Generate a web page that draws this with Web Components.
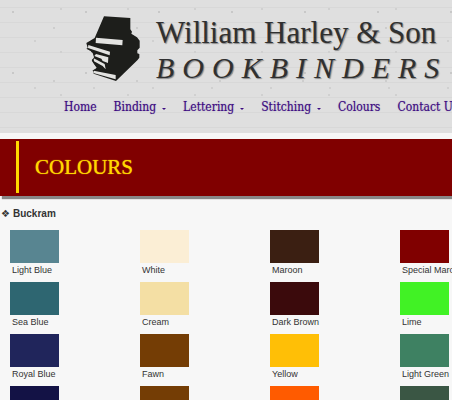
<!DOCTYPE html>
<html lang="en"><head><meta charset="utf-8"><title>William Harley &amp; Son Bookbinders – Colours</title>
<style>
body{margin:0;background:#f7f7f7;color:#333;font-family:"Liberation Sans",Arial,sans-serif;overflow:hidden}
</style></head><body>
<site-header>
<brand-logo slot="brand"></brand-logo>
<nav-item>Home</nav-item><nav-item menu>Binding</nav-item><nav-item menu>Lettering</nav-item><nav-item menu>Stitching</nav-item><nav-item>Colours</nav-item><nav-item>Contact Us</nav-item>
</site-header>
<main>
<page-banner>COLOURS</page-banner>
<colour-range><span slot="title">Buckram</span>
<colour-swatch colour="#588591">Light Blue</colour-swatch><colour-swatch colour="#fbeed5">White</colour-swatch><colour-swatch colour="#3b1f12">Maroon</colour-swatch><colour-swatch colour="#800000">Special Maroon</colour-swatch>
<colour-swatch colour="#2e6671">Sea Blue</colour-swatch><colour-swatch colour="#f4dfa4">Cream</colour-swatch><colour-swatch colour="#3b0a0c">Dark Brown</colour-swatch><colour-swatch colour="#41f225">Lime</colour-swatch>
<colour-swatch colour="#20255b">Royal Blue</colour-swatch><colour-swatch colour="#743d05">Fawn</colour-swatch><colour-swatch colour="#ffbf06">Yellow</colour-swatch><colour-swatch colour="#3e8162">Light Green</colour-swatch>
<colour-swatch colour="#131245"></colour-swatch><colour-swatch colour="#743d05"></colour-swatch><colour-swatch colour="#ff5b00"></colour-swatch><colour-swatch colour="#3a5644"></colour-swatch>
</colour-range>
</main>
<script>
const define = (name, html, setup) => customElements.define(name, class extends HTMLElement {
  constructor(){ super(); this.attachShadow({mode:'open'}).innerHTML = html; }
  connectedCallback(){ if (setup) setup(this, this.shadowRoot); }
});
define('site-header', `<style>
:host{display:block;overflow:hidden;padding:14px 0 16px;background-color:#dfdfdf;
background-image:radial-gradient(circle at 13px 12px,#c8c8c8 0 1px,transparent 1px),radial-gradient(circle at 61px 9px,#d0d0d0 0 1px,transparent 1px),radial-gradient(circle at 35px 41px,#d0d0d0 0 1px,transparent 1px),radial-gradient(circle at 54px 28px,#cdcdcd 0 1px,transparent 1px),radial-gradient(circle at 7px 38px,#d0d0d0 0 1px,transparent 1px),repeating-linear-gradient(transparent 0 7px,#d8d8d8 7px 8px,transparent 8px 15px);
background-size:73px 61px,67px 43px,59px 47px,83px 53px,71px 37px,auto}
.brand{padding-left:86px}
nav{display:flex;gap:17px;padding:13px 0 0 64px}
</style><div class="brand"><slot name="brand"></slot></div><nav aria-label="Main"><slot></slot></nav>`);
define('brand-logo', `<style>
:host{display:flex;gap:15px;color:#303030;white-space:nowrap;font-family:"Liberation Serif","Times New Roman",serif;text-shadow:1px 1px 1px #888}
svg{flex:none;width:55px;height:66px;margin-top:2px}
h1,p{margin:0;font-weight:400}
h1{font-size:31px;line-height:37px}
p{font-size:30px;line-height:33px;font-style:italic;letter-spacing:8px}
</style><svg viewBox="30 25 165 198" aria-hidden="true"><path fill="#1d1e1b" d="M84 26L163 31V65L168 72L166 78L183 89L191 99V120L184 128V137L190 139V150L184 158L120 220L53 198L50 188L57 184L62 180L49 163L47 157L53 149L47 140L45 131L31 123L35 121L31 106L56 91Z"/><path fill="#e3e3e1" d="M60 90L140 97L139 113L59 106ZM37 112L102 132L101 143L36 121ZM60 139L97 149L96 166L80 160L76 153L55 145ZM53 152L86 169L89 185L80 175L54 161ZM53 189L119 202V215L52 196Z"/><path fill="#dfdfdf" d="M44 132L50 136L54 149L46 158L60 181L49 188L40 170Z"/></svg><div><h1>William Harley &amp; Son</h1><p>BOOKBINDERS</p></div>`);
define('nav-item', `<style>
:host{display:block;flex:none}
a{display:flex;align-items:center;gap:6px;color:#3d0c82;text-decoration:none;white-space:nowrap;font:12px/20px "DejaVu Serif Condensed","DejaVu Serif",serif;text-shadow:0 0 1px #3d0c8280}
i{display:none;border:solid transparent;border-width:2px 2px 0;border-top-color:#3d0c82;margin-top:3px}
:host([menu]) i{display:block}
</style><a href="#"><slot></slot><i></i></a>`);
define('page-banner', `<style>
:host{display:block;margin-top:6px;padding:2px 0 3px 16px;background:#800000;box-shadow:2px 3px 1px #888}
h2{margin:0;border-left:3px solid #ffd700;padding-left:16px;color:#ffd700;font:400 21px/52px "Liberation Serif","Times New Roman",serif;text-shadow:0 0 1px #ffd700}
</style><h2><slot></slot></h2>`);
define('colour-range', `<style>
:host{display:block;padding-top:10px}
h3{margin:0;padding-left:1px;display:flex;gap:3px;font-size:10px;line-height:16px}
h3 span{font-family:"DejaVu Sans",sans-serif;font-weight:400}
div{display:grid;grid-template-columns:repeat(4,minmax(130px,1fr));row-gap:5px;padding:8px 0 0 10px}
</style><h3><span>❖</span><slot name="title"></slot></h3><div><slot></slot></div>`);
define('colour-swatch', `<style>
:host{display:block;min-height:47px}
figure{margin:0}
.chip{width:49px;height:33px}
figcaption{padding-left:2px;font-size:9px;line-height:14px;white-space:nowrap}
</style><figure><div class="chip"></div><figcaption><slot></slot></figcaption></figure>`, (el, root) => root.querySelector('.chip').style.background = el.getAttribute('colour'));
</script></body></html>
